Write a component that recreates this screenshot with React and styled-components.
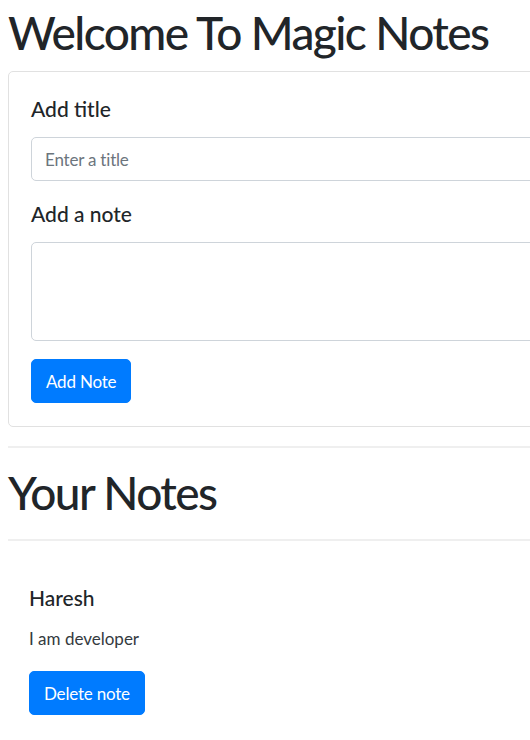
import styled, { createGlobalStyle } from "styled-components";

const GlobalStyle = createGlobalStyle`
  html, body {
    margin: 0;
    overflow: hidden;
    background: #fff;
  }
  body {
    font-family: Lato, "Noto Sans", sans-serif;
    color: #212529;
  }
`;

function App() {
  return (
    <>
      <GlobalStyle />
      <Page>
        <Title>Welcome To Magic Notes</Title>
        <Card>
          <Label htmlFor="title">Add title</Label>
          <TitleInput id="title" placeholder="Enter a title" />
          <Label htmlFor="note" $top={20}>
            Add a note
          </Label>
          <NoteArea id="note" />
          <BlueButton $top={18}>Add Note</BlueButton>
        </Card>
        <Rule $top={19} />
        <Title $top={15}>Your Notes</Title>
        <Rule $top={16} />
        <NoteCard>
          <NoteTitle>Haresh</NoteTitle>
          <NoteText>I am developer</NoteText>
          <BlueButton $top={19}>Delete note</BlueButton>
        </NoteCard>
      </Page>
    </>
  );
}

export default App;

const Page = styled.div`
  width: 780px;
  padding: 3px 0 0 8px;
`;

const Title = styled.h1`
  margin: ${(p) => p.$top || 0}px 0 0;
  font-size: 46px;
  line-height: 60px;
  font-weight: 500;
  letter-spacing: -1.6px;
  color: #212529;
`;

const Card = styled.div`
  display: flex;
  flex-direction: column;
  align-items: flex-start;
  margin-top: 8px;
  padding: 24px 22px 23px;
  border: 1px solid #e1e1e1;
  border-radius: 5px;
`;

const Label = styled.label`
  display: block;
  margin-top: ${(p) => p.$top || 0}px;
  font-size: 21px;
  line-height: 26px;
  font-weight: 500;
  color: #212529;
`;

const fieldBase = `
  box-sizing: border-box;
  width: 100%;
  margin-top: 15px;
  border: 1px solid #ced4da;
  border-radius: 5px;
  background: #fff;
  font-family: Lato, "Noto Sans", sans-serif;
  font-size: 17px;
  letter-spacing: -0.2px;
  color: #495057;
  outline: none;
`;

const TitleInput = styled.input`
  ${fieldBase}
  height: 44px;
  padding: 0 13px;
  &::placeholder {
    color: #6c757d;
  }
`;

const NoteArea = styled.textarea`
  ${fieldBase}
  height: 99px;
  padding: 8px 13px;
  resize: none;
`;

const BlueButton = styled.button`
  margin-top: ${(p) => p.$top || 0}px;
  height: 44px;
  padding: 0 14px;
  border: 1px solid #007bff;
  border-radius: 5px;
  background: #007bff;
  color: #fff;
  font-family: Lato, "Noto Sans", sans-serif;
  font-size: 17px;
  letter-spacing: -0.2px;
  cursor: pointer;
`;

const Rule = styled.hr`
  margin: ${(p) => p.$top || 0}px 0 0;
  border: 0;
  border-top: 2px solid #efefef;
`;

const NoteCard = styled.div`
  display: flex;
  flex-direction: column;
  align-items: flex-start;
  margin-top: 44px;
  padding: 0 21px;
`;

const NoteTitle = styled.h5`
  margin: 0;
  font-size: 21px;
  line-height: 26px;
  font-weight: 500;
  color: #212529;
`;

const NoteText = styled.p`
  margin: 15px 0 0;
  font-size: 17px;
  line-height: 26px;
  color: #343a40;
`;
